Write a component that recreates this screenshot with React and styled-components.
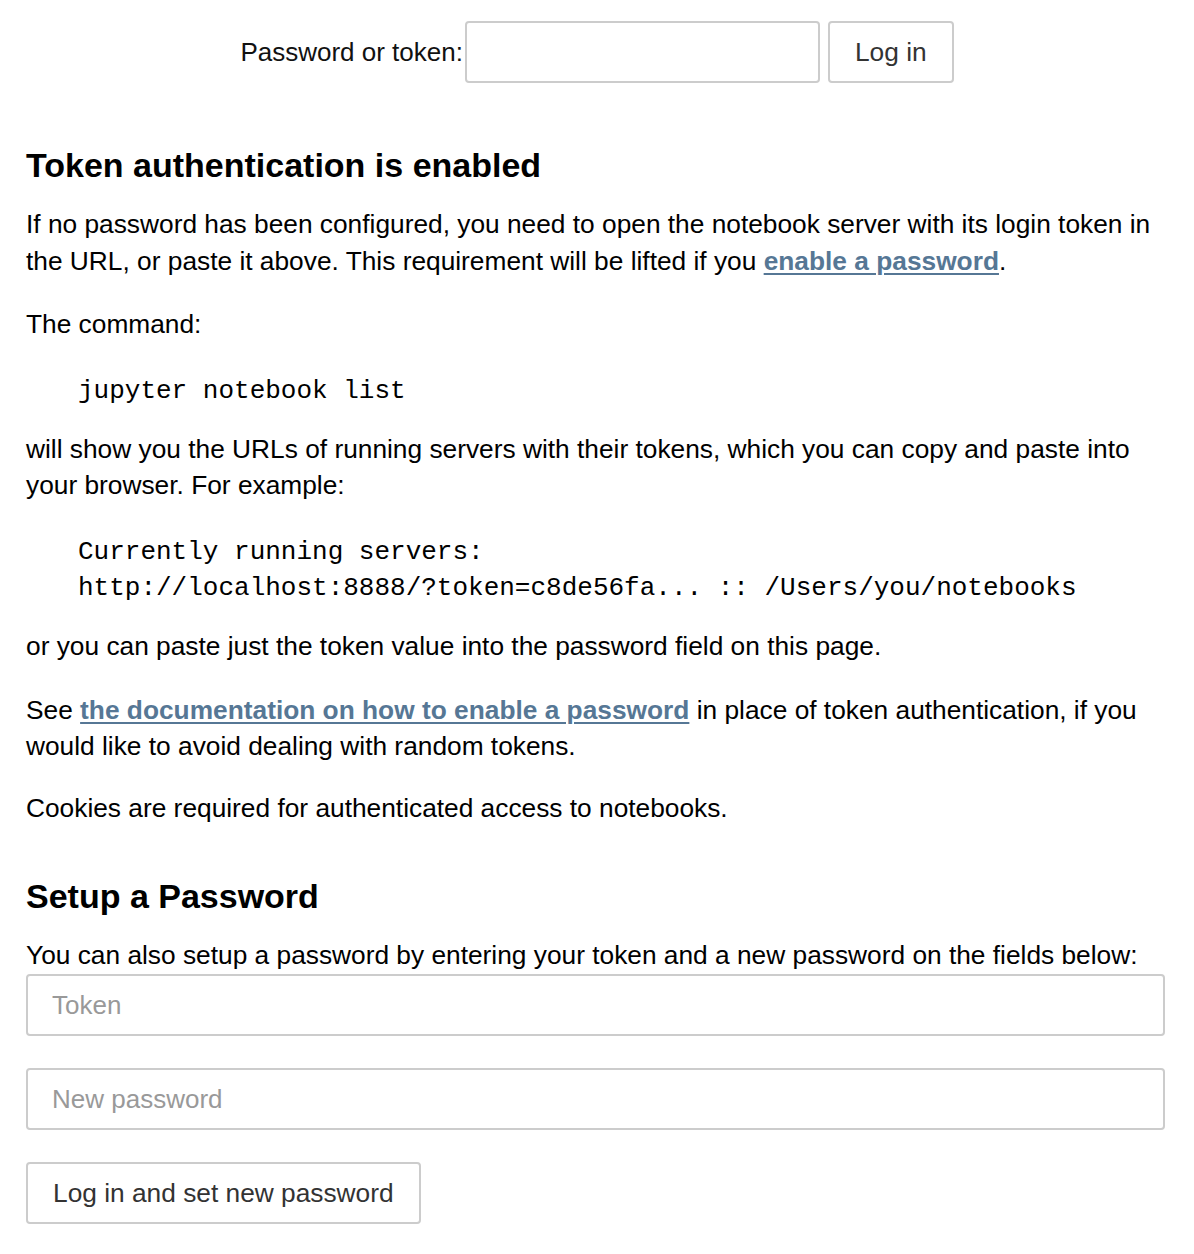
import React from "react";
import styled, { createGlobalStyle } from "styled-components";

const Global = createGlobalStyle`
  html, body { margin: 0; padding: 0; background: #fff; }
  body {
    font-family: "Liberation Sans", Arial, Helvetica, sans-serif;
    font-size: 26.3px;
    line-height: 36px;
    color: #000;
  }
  * { box-sizing: border-box; }
`;

const Page = styled.div`
  padding: 21px 29px 28px 26px;
`;

const LoginRow = styled.form`
  display: flex;
  justify-content: center;
  align-items: center;
  margin: 0 0 62px 3px;
`;

const Label = styled.label`
  font-size: 26px;
  color: #111;
  margin-right: 2px;
`;

const TextInput = styled.input`
  font-family: "Liberation Sans", Arial, Helvetica, sans-serif;
  font-size: 26px;
  height: 62px;
  width: ${(p) => p.$width || "100%"};
  padding: 0 24px;
  border: 2px solid #ccc;
  border-radius: 4px;
  color: #555;
  background: #fff;
  outline: none;
  display: block;
  &::placeholder { color: #999; }
`;

const Button = styled.button`
  font-family: "Liberation Sans", Arial, Helvetica, sans-serif;
  font-size: 26.3px;
  height: 62px;
  padding: 0 25px;
  border: 2px solid #ccc;
  border-radius: 4px;
  background: #fff;
  color: #333;
  margin-left: ${(p) => p.$ml || "0"};
  cursor: pointer;
`;

const Heading = styled.h3`
  font-size: 34px;
  font-weight: bold;
  line-height: 40px;
  margin: 0 0 21px 0;
  color: #000;
`;

const Para = styled.p`
  margin: 0 0 ${(p) => p.$mb || "26px"} 0;
  line-height: ${(p) => p.$lh || "36px"};
`;

const Code = styled.pre`
  font-family: "Liberation Mono", "Courier New", monospace;
  font-size: 26px;
  line-height: 36px;
  margin: 31px 0 22px 52px;
  color: #000;
`;

const Link = styled.a`
  color: #567795;
  font-weight: bold;
  text-decoration: underline;
  text-underline-offset: 3px;
  text-decoration-thickness: 2px;
`;

const SetupSection = styled.section`
  margin-top: 50px;
  display: flex;
  flex-direction: column;
`;

const FieldStack = styled.div`
  display: flex;
  flex-direction: column;
  align-items: flex-start;
  gap: 32px;
  margin-top: 1px;
`;

export default function App() {
  return (
    <>
      <Global />
      <Page>
        <LoginRow onSubmit={(e) => e.preventDefault()}>
          <Label htmlFor="password_input">Password or token:</Label>
          <TextInput id="password_input" type="password" $width="355px" />
          <Button type="submit" $ml="8px">Log in</Button>
        </LoginRow>

        <Heading>Token authentication is enabled</Heading>
        <Para $lh="37px">
          If no password has been configured, you need to open the notebook server with its login token in
          the URL, or paste it above. This requirement will be lifted if you{" "}
          <Link href="#">enable a password</Link>.
        </Para>
        <Para>The command:</Para>
        <Code>jupyter notebook list</Code>
        <Para>
          will show you the URLs of running servers with their tokens, which you can copy and paste into
          your browser. For example:
        </Para>
        <Code>
          {"Currently running servers:\nhttp://localhost:8888/?token=c8de56fa... :: /Users/you/notebooks"}
        </Code>
        <Para $mb="28px">or you can paste just the token value into the password field on this page.</Para>
        <Para>
          See <Link href="#">the documentation on how to enable a password</Link> in place of token
          authentication, if you would like to avoid dealing with random tokens.
        </Para>
        <Para $mb="0">Cookies are required for authenticated access to notebooks.</Para>

        <SetupSection>
          <Heading>Setup a Password</Heading>
          <Para $mb="0">
            You can also setup a password by entering your token and a new password on the fields below:
          </Para>
          <FieldStack>
            <TextInput type="text" placeholder="Token" />
            <TextInput type="password" placeholder="New password" />
            <Button type="button">Log in and set new password</Button>
          </FieldStack>
        </SetupSection>
      </Page>
    </>
  );
}
